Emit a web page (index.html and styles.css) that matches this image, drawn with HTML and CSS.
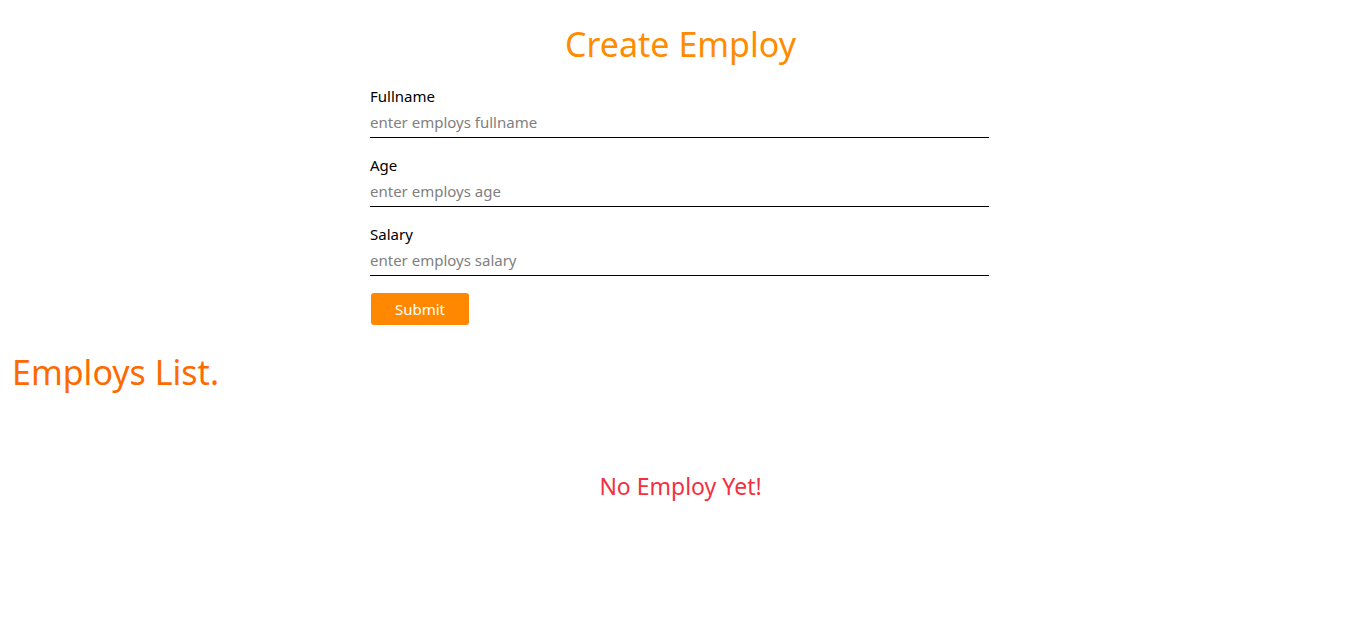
FILE: index.html
```html
<!DOCTYPE html>
<html>
<head>
<meta charset="utf-8">
<link rel="stylesheet" href="styles.css">
</head>
<body>
<div class="create">
  <h1 class="title">Create Employ</h1>
  <form class="form">
    <div class="field">
      <label class="label">Fullname</label>
      <input class="input" placeholder="enter employs fullname">
    </div>
    <div class="field">
      <label class="label">Age</label>
      <input class="input" placeholder="enter employs age">
    </div>
    <div class="field">
      <label class="label">Salary</label>
      <input class="input" placeholder="enter employs salary">
    </div>
    <button class="submit" type="button">Submit</button>
  </form>
</div>
<h2 class="list-title">Employs List.</h2>
<p class="empty">No Employ Yet!</p>
</body>
</html>
```
FILE: styles.css
```css
body {
  margin: 0;
  font-family: "Noto Sans", sans-serif;
  background: #fff;
}
.create {
  display: flex;
  flex-direction: column;
  align-items: center;
}
.title {
  margin: 20px 0 0;
  font-weight: 400;
  font-size: 34px;
  line-height: 48px;
  color: #ff8c00;
}
.form {
  width: 619px;
  margin: 18px 2px 0 0;
  display: flex;
  flex-direction: column;
}
.field {
  display: flex;
  flex-direction: column;
  margin-bottom: 17px;
}
.label {
  font-size: 15px;
  line-height: 21px;
  color: #000;
}
.input {
  border: none;
  border-bottom: 1px solid #000;
  padding: 0;
  height: 30px;
  font-family: inherit;
  font-size: 15px;
  outline: none;
}
.input::placeholder {
  color: #808080;
}
.submit {
  align-self: flex-start;
  margin: 0 0 0 1px;
  width: 98px;
  height: 32px;
  border: none;
  border-radius: 3px;
  background: #ff8800;
  color: #fff;
  font-family: inherit;
  font-size: 15px;
}
.list-title {
  margin: 23px 0 0 12px;
  font-weight: 400;
  font-size: 34px;
  line-height: 48px;
  color: #ff6a00;
}
.empty {
  margin: 74px 0 0;
  text-align: center;
  font-size: 23px;
  line-height: 32px;
  color: #f4303f;
}
```
